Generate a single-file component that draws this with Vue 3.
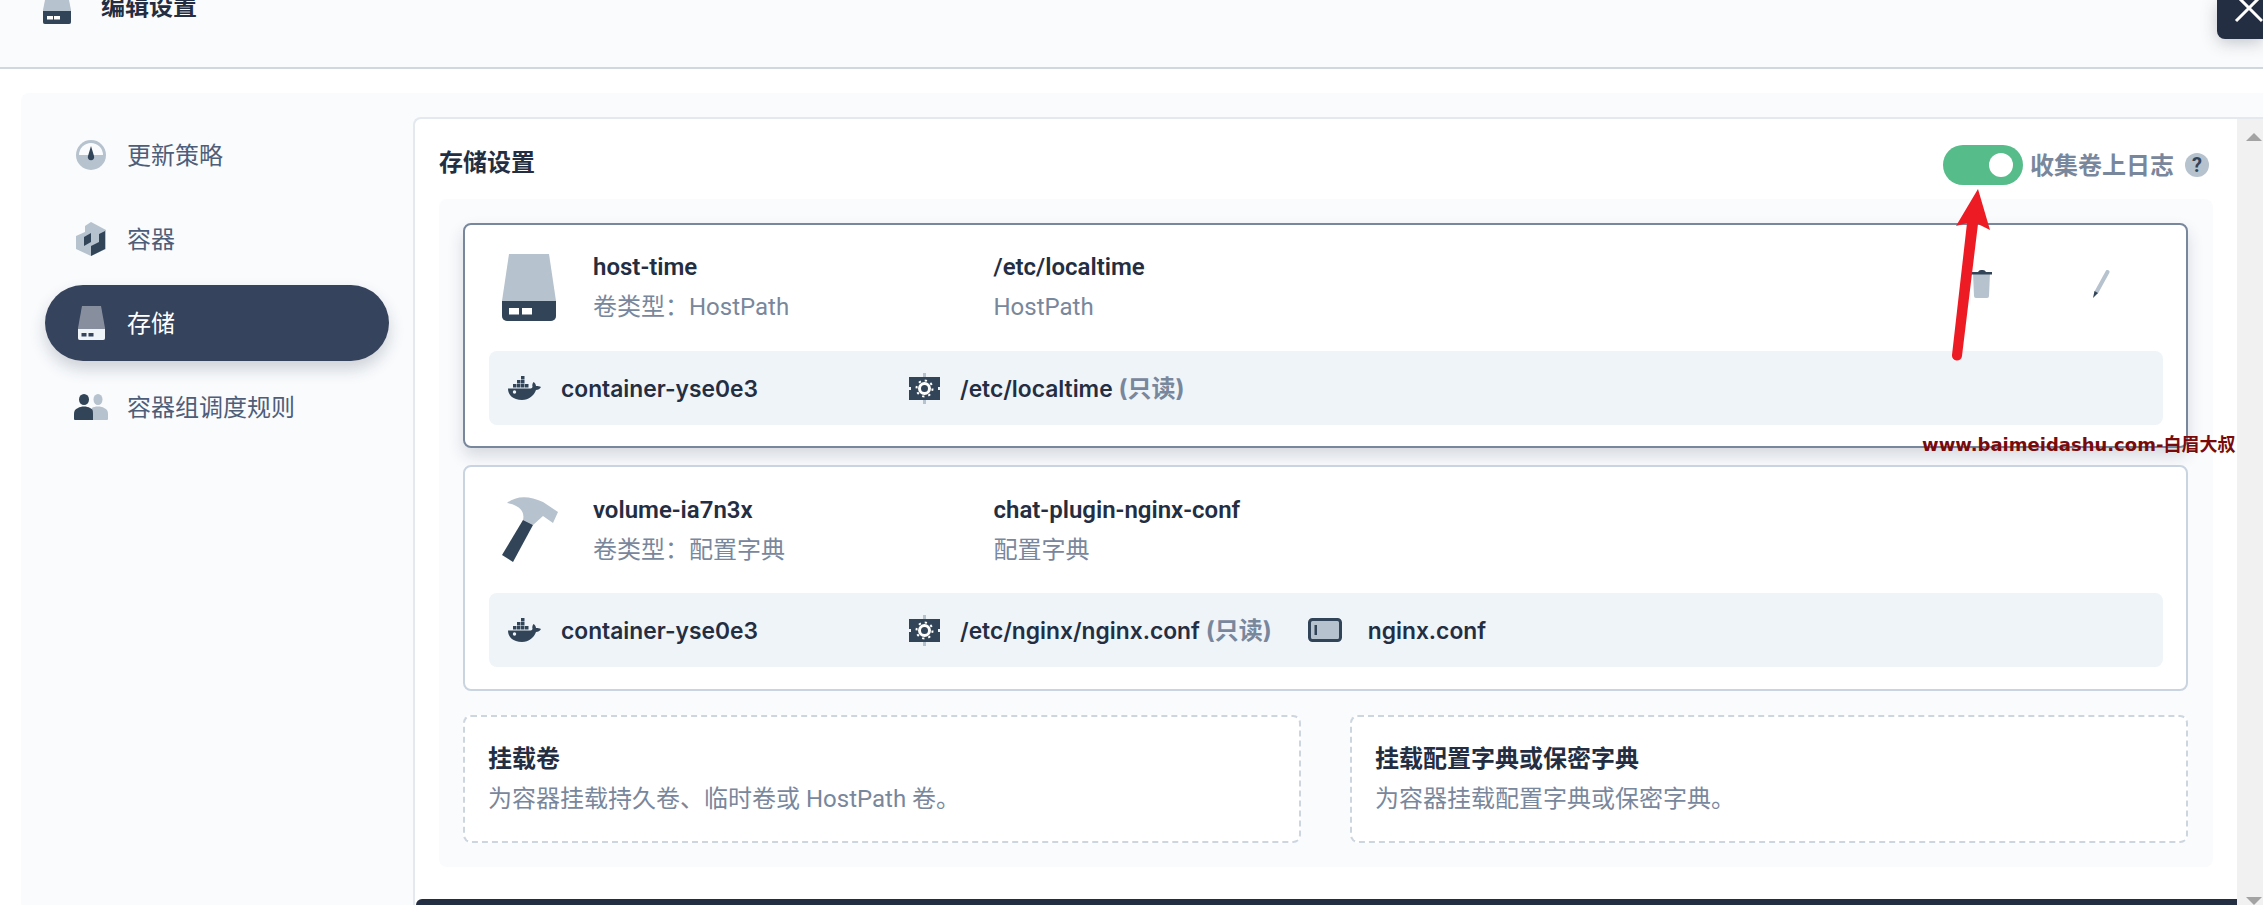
<template>
  <div class="page">
    <header class="head">
      <svg class="head-icon" width="28" height="34" viewBox="0 0 28 34"><path d="M4 0h20l4 20v12a2 2 0 0 1-2 2H2a2 2 0 0 1-2-2V20z" fill="#b6c2cd"/><path d="M0 21h28v11a2 2 0 0 1-2 2H2a2 2 0 0 1-2-2z" fill="#324558"/><rect x="4" y="26" width="6" height="3.5" fill="#fff"/><rect x="11" y="26" width="6" height="3.5" fill="#fff"/></svg>
      <div class="head-title">编辑设置</div>
    </header>

    <div class="body">
      <aside class="side">
        <div class="nav">
          <span class="nav-ic">
            <svg width="30" height="30" viewBox="0 0 30 30"><circle cx="15" cy="15" r="15" fill="#b6c2cd"/><path d="M3 15a12 12 0 0 1 24 0z" fill="#f9fbfd"/><path d="M15 6l3 10a3.2 3.2 0 1 1-6 0z" fill="#324558"/></svg>
          </span>
          <span class="nav-text">更新策略</span>
        </div>
        <div class="nav">
          <span class="nav-ic">
            <svg width="30" height="34" viewBox="0 0 30 34"><path d="M15 0l15 8v19l-15 7-15-7V14l9-4V4z" fill="#b6c2cd"/><path d="M29 9v18l-14 7V24l8-4V12z" fill="#324558"/><path d="M8 15l7-4v9l-7 4z" fill="#324558"/></svg>
          </span>
          <span class="nav-text">容器</span>
        </div>
        <div class="nav on">
          <span class="nav-ic">
            <svg width="27" height="34" viewBox="0 0 27 34"><path d="M4 0h19l4 22v10a2 2 0 0 1-2 2H2a2 2 0 0 1-2-2V22z" fill="#878f9f"/><path d="M0 23h27v9a2 2 0 0 1-2 2H2a2 2 0 0 1-2-2z" fill="#eff4f9"/><rect x="3.5" y="27" width="5" height="3.5" fill="#36435c"/><rect x="10.500" y="27" width="5" height="3.5" fill="#36435c"/></svg>
          </span>
          <span class="nav-text">存储</span>
        </div>
        <div class="nav">
          <span class="nav-ic">
            <svg width="34" height="26" viewBox="0 0 34 26"><ellipse cx="24" cy="5.500" rx="4.500" ry="5.500" fill="#b6c2cd"/><path d="M18 14c2-2 10-2 12 0 3 1 4 3 4 6v5a1 1 0 0 1-1 1H18z" fill="#b6c2cd"/><ellipse cx="10" cy="5.500" rx="5" ry="5.500" fill="#324558"/><path d="M0 20c0-3 1-5 4-6 3-2 9-2 12 0 3 1 3 3 3 6v6H1a1 1 0 0 1-1-1z" fill="#324558"/></svg>
          </span>
          <span class="nav-text">容器组调度规则</span>
        </div>
      </aside>

      <main class="main">
        <div class="content">
          <div class="title-row">
            <div class="section-title">存储设置</div>
            <div class="switch-wrap">
              <span class="switch"><i class="knob"></i></span>
              <span class="switch-label">收集卷上日志</span>
              <span class="help">?</span>
            </div>
          </div>

          <div class="box">
            <div class="card active">
              <div class="top">
                <div class="vol-ic">
                  <svg width="54" height="67" viewBox="0 0 54 67"><path d="M7 0h40l7 47v15a5 5 0 0 1-5 5H5a5 5 0 0 1-5-5V47z" fill="#b6c2cd"/><path d="M0 47h54v15a5 5 0 0 1-5 5H5a5 5 0 0 1-5-5z" fill="#324558"/><rect x="7" y="54" width="10" height="6.500" fill="#fff"/><rect x="20" y="54" width="10" height="6.500" fill="#fff"/></svg>
                </div>
                <div class="col col1"><div class="name">host-time</div><div class="sub">卷类型：HostPath</div></div>
                <div class="col col2"><div class="name">/etc/localtime</div><div class="sub">HostPath</div></div>
                <div class="actions">
                  <span class="act trash">
                    <svg width="21" height="28" viewBox="0 0 21 28"><path d="M2 3h17l-1 23a2 2 0 0 1-2 2H5a2 2 0 0 1-2-2z" fill="#b6c2cd"/><path d="M0 2h7q1-2 3-2h2q2 0 3 2h6v2.500H0z" fill="#324558"/></svg>
                  </span>
                  <span class="act pencil">
                    <svg width="18" height="28" viewBox="0 0 18 28"><path d="M15.500 2L4.500 22" stroke="#b6c2cd" stroke-width="4" stroke-linecap="round" fill="none"/><path d="M2.500 21l3.500 2L1 28z" fill="#324558"/></svg>
                  </span>
                </div>
              </div>
              <div class="mount">
                <div class="cell first">
                  <svg class="docker" width="33" height="24" viewBox="0 0 33 24"><g fill="#324558"><rect x="13" y="0" width="3.500" height="3.500"/><rect x="13" y="4" width="3.500" height="3.500"/><rect x="9" y="4" width="3.500" height="3.500"/><rect x="5" y="8" width="3.500" height="3.500"/><rect x="9" y="8" width="3.500" height="3.500"/><rect x="13" y="8" width="3.500" height="3.500"/><rect x="17" y="8" width="3.500" height="3.500"/><path d="M0 12.500h22c1 0 2-.5 2.500-1.500-.5-2 0-4 1-5 1.500 1 2.500 2.500 2.500 4 2 0 3.500 0 5 1-1 2-3 3-5 3-2 5.500-7 10-14 10C5 24 0 19 0 12.500z"/></g><circle cx="6.500" cy="16" r="1.700" fill="#eff4f9"/></svg>
                  <span class="m-text">container-yse0e3</span>
                </div>
                <div class="cell">
                  <svg class="gear" width="31" height="31" viewBox="0 0 31 31"><rect x="14" y="0" width="3" height="31" fill="#b6c2cd"/><rect x="0" y="4" width="31" height="23" fill="#324558"/><path d="M0 14h2v3H0zM29 14h2v3h-2z" fill="#eff4f9"/><circle cx="15.500" cy="15.500" r="5" fill="none" stroke="#fff" stroke-width="3"/><circle cx="15.500" cy="15.500" r="8" fill="none" stroke="#fff" stroke-width="2" stroke-dasharray="2.300 3.980"/></svg>
                  <span class="m-text">/etc/localtime <em>(只读)</em></span>
                </div>
              </div>
            </div>

            <div class="card">
              <div class="top">
                <div class="vol-ic">
                  <svg class="hammer" width="56" height="66" viewBox="0 0 56 66"><path d="M5 7C12 1 25-2 41 6l15 10-5 11-10-7-10 9-10-5C23 16 18 9 5 7z" fill="#b6c2cd"/><path d="M21 24l10 5-20 37-11-7z" fill="#324558"/></svg>
                </div>
                <div class="col col1"><div class="name">volume-ia7n3x</div><div class="sub">卷类型：配置字典</div></div>
                <div class="col col2"><div class="name">chat-plugin-nginx-conf</div><div class="sub">配置字典</div></div>
              </div>
              <div class="mount">
                <div class="cell first">
                  <svg class="docker" width="33" height="24" viewBox="0 0 33 24"><g fill="#324558"><rect x="13" y="0" width="3.500" height="3.500"/><rect x="13" y="4" width="3.500" height="3.500"/><rect x="9" y="4" width="3.500" height="3.500"/><rect x="5" y="8" width="3.500" height="3.500"/><rect x="9" y="8" width="3.500" height="3.500"/><rect x="13" y="8" width="3.500" height="3.500"/><rect x="17" y="8" width="3.500" height="3.500"/><path d="M0 12.500h22c1 0 2-.5 2.500-1.500-.5-2 0-4 1-5 1.500 1 2.500 2.500 2.500 4 2 0 3.500 0 5 1-1 2-3 3-5 3-2 5.500-7 10-14 10C5 24 0 19 0 12.500z"/></g><circle cx="6.500" cy="16" r="1.700" fill="#eff4f9"/></svg>
                  <span class="m-text">container-yse0e3</span>
                </div>
                <div class="cell">
                  <svg class="gear" width="31" height="31" viewBox="0 0 31 31"><rect x="14" y="0" width="3" height="31" fill="#b6c2cd"/><rect x="0" y="4" width="31" height="23" fill="#324558"/><path d="M0 14h2v3H0zM29 14h2v3h-2z" fill="#eff4f9"/><circle cx="15.500" cy="15.500" r="5" fill="none" stroke="#fff" stroke-width="3"/><circle cx="15.500" cy="15.500" r="8" fill="none" stroke="#fff" stroke-width="2" stroke-dasharray="2.300 3.980"/></svg>
                  <span class="m-text">/etc/nginx/nginx.conf <em>(只读)</em></span>
                </div>
                <div class="cell third">
                  <svg class="file" width="34" height="24" viewBox="0 0 34 24"><rect x="1.500" y="1.500" width="31" height="21" rx="3" fill="#b6c2cd" stroke="#324558" stroke-width="3"/><rect x="6.500" y="7" width="2.500" height="10" fill="#324558"/></svg>
                  <span class="m-text">nginx.conf</span>
                </div>
              </div>
            </div>

            <div class="adds">
              <div class="add">
                <div class="add-title">挂载卷</div>
                <div class="add-desc">为容器挂载持久卷、临时卷或 HostPath 卷。</div>
              </div>
              <div class="add">
                <div class="add-title">挂载配置字典或保密字典</div>
                <div class="add-desc">为容器挂载配置字典或保密字典。</div>
              </div>
            </div>
          </div>

          <div class="footer"></div>
        </div>
        <div class="scrollbar">
          <i class="tri up"></i>
          <i class="tri down"></i>
        </div>
      </main>
    </div>

    <button class="close">
      <svg width="30" height="30" viewBox="0 0 30 30"><path d="M2 2l26 26M28 2L2 28" stroke="#fff" stroke-width="3" fill="none"/></svg>
    </button>

    <svg class="arrow" width="52" height="182" viewBox="0 0 52 182"><path d="M38 9L16 46l11-3L12 175a5 5 0 0 0 10 1L38 44l12 6z" fill="#ed1c24"/></svg>
    <div class="mark">www.baimeidashu.com-白眉大叔</div>
  </div>
</template>

<script setup>
</script>

<style>
html, body { margin: 0; padding: 0; background: #fff; overflow: hidden; }
</style>

<style scoped>
* { box-sizing: border-box; }
.page {
  position: relative;
  width: 2263px;
  height: 905px;
  overflow: hidden;
  background: #fff;
  font-family: Roboto, "Noto Sans CJK SC", sans-serif;
  font-size: 24px;
  color: #242e42;
  display: flex;
  flex-direction: column;
}
.head {
  flex: none;
  height: 69px;
  background: #fafbfc;
  border-bottom: 2px solid #d1d7df;
  padding: 0 0 0 43px;
  display: flex;
  align-items: flex-start;
}
.head-icon { margin-top: -10px; flex: none; }
.head-title {
  margin: -13px 0 0 30px;
  font-weight: 700;
  line-height: 40px;
}
.body {
  flex: 1;
  min-height: 0;
  margin: 24px 0 0 21px;
  background: #f9fbfd;
  border-top-left-radius: 8px;
  display: flex;
}
.side {
  flex: none;
  width: 392px;
  padding: 24px 0 0 24px;
  display: flex;
  flex-direction: column;
  gap: 8px;
}
.nav {
  width: 344px;
  height: 76px;
  border-radius: 38px;
  padding-left: 26px;
  display: flex;
  align-items: center;
  color: #4f5e78;
}
.nav-text { margin-top: -4px; }
.nav.on {
  background: #36435c;
  color: #fff;
  box-shadow: 0 8px 16px rgba(36, 46, 66, 0.2);
}
.nav-ic {
  width: 40px;
  margin-right: 16px;
  display: flex;
  justify-content: center;
}
.main {
  flex: 1;
  min-width: 0;
  margin-top: 24px;
  background: #fff;
  border-top: 2px solid #e3e9ef;
  border-left: 2px solid #e3e9ef;
  border-top-left-radius: 8px;
  display: flex;
}
.content {
  flex: 1;
  min-width: 0;
  padding-left: 24px;
  padding-right: 24px;
  display: flex;
  flex-direction: column;
  position: relative;
}
.title-row {
  flex: none;
  height: 80px;
  padding-top: 26px;
  display: flex;
  justify-content: space-between;
  align-items: flex-start;
}
.section-title { font-weight: 700; line-height: 36px; }
.switch-wrap {
  display: flex;
  align-items: center;
  height: 40px;
  margin-right: 4px;
}
.switch {
  width: 80px;
  height: 40px;
  border-radius: 20px;
  background: #55bc8a;
  display: flex;
  align-items: center;
  justify-content: flex-end;
  padding-right: 10px;
}
.knob {
  display: block;
  width: 24px;
  height: 24px;
  border-radius: 50%;
  background: #fff;
}
.switch-label {
  margin: -4px 0 0 7px;
  font-weight: 700;
  color: #79879c;
}
.help {
  width: 24px;
  height: 24px;
  margin-left: 11px;
  border-radius: 50%;
  background: #b6c2cd;
  color: #324558;
  font-size: 20px;
  font-weight: 700;
  line-height: 24px;
  text-align: center;
}
.box {
  flex: none;
  height: 668px;
  background: #f9fbfd;
  border-radius: 8px;
  padding: 24px 25px 24px 24px;
  display: flex;
  flex-direction: column;
}
.card {
  flex: none;
  height: 226px;
  background: #fff;
  border: 2px solid #c9d4e0;
  border-radius: 8px;
  padding: 0 23px 0 24px;
}
.card.active {
  height: 225px;
  border-color: #79879c;
  box-shadow: 0 8px 16px rgba(36, 46, 66, 0.16);
  margin-bottom: 17px;
}
.top {
  height: 126px;
  display: flex;
  align-items: center;
}
.card.active .top { height: 124px; margin-bottom: 2px; }
.vol-ic {
  flex: none;
  width: 80px;
  margin-right: 24px;
  display: flex;
  justify-content: center;
}
.hammer { margin: -3px 0 0 2px; }
.col1 { flex: none; width: 400.5px; }
.col2 { flex: 1; min-width: 0; }
.name {
  font-weight: 600;
  line-height: 40px;
  font-size: 24px;
}
.sub {
  line-height: 40px;
  color: #79879c;
}
.actions { flex: none; display: flex; margin-top: -6px; }
.act {
  width: 120px;
  display: flex;
  justify-content: center;
}
.act.trash { padding-right: 4px; }
.act.pencil { padding-right: 4px; }
.mount {
  height: 74px;
  background: #eff4f9;
  border-radius: 8px;
  padding-left: 19px;
  display: flex;
  align-items: center;
}
.cell { display: flex; align-items: center; }
.cell.first { width: 401px; }
.docker { margin-right: 20px; flex: none; }
.gear { margin-right: 20px; flex: none; }
.cell.third { margin-left: 36px; }
.file { margin-right: 26px; flex: none; }
.m-text {
  font-family: Inter, "Noto Sans CJK SC", sans-serif;
  font-size: 22.800px;
  font-weight: 600;
  line-height: 32px;
  margin-top: 2px;
  white-space: nowrap;
}
.m-text em { font-style: normal; font-size: 24px; font-weight: 700; color: #79879c; }
.adds {
  margin-top: 24px;
  display: flex;
  gap: 49px;
}
.add {
  flex: 1;
  height: 128px;
  background: #fff;
  border: 2px dashed #cdd5de;
  border-radius: 8px;
  padding: 24px 0 0 23px;
}
.add-title { font-weight: 700; line-height: 36px; }
.add-desc { color: #79879c; line-height: 46px; margin-top: -1px; }
.footer {
  position: absolute;
  left: 1px;
  right: 0;
  bottom: 0;
  height: 6px;
  background: #242e42;
  border-top-left-radius: 6px;
}
.scrollbar {
  flex: none;
  width: 26px;
  background: #f1f1f1;
  position: relative;
}
.tri {
  position: absolute;
  left: 9px;
  width: 0;
  height: 0;
  border-left: 8px solid transparent;
  border-right: 8px solid transparent;
}
.tri.up { top: 14px; border-bottom: 8px solid #a3a3a3; }
.tri.down { bottom: 0; border-top: 8px solid #a3a3a3; }
.close {
  position: absolute;
  right: 0;
  top: 0;
  width: 46px;
  height: 39px;
  padding: 0;
  border: 0;
  background: #242e42;
  border-bottom-left-radius: 8px;
  box-shadow: 0 4px 16px rgba(36, 46, 66, 0.25);
  overflow: hidden;
}
.close svg { position: absolute; left: 17px; top: -7px; }
.arrow { position: absolute; left: 1940px; top: 180px; }
.mark {
  position: absolute;
  left: 1922px;
  top: 432px;
  font-family: "DejaVu Sans", "Noto Sans CJK SC", sans-serif;
  font-size: 18px;
  font-weight: 700;
  line-height: 26px;
  color: #7a0a0a;
  white-space: nowrap;
}
</style>
